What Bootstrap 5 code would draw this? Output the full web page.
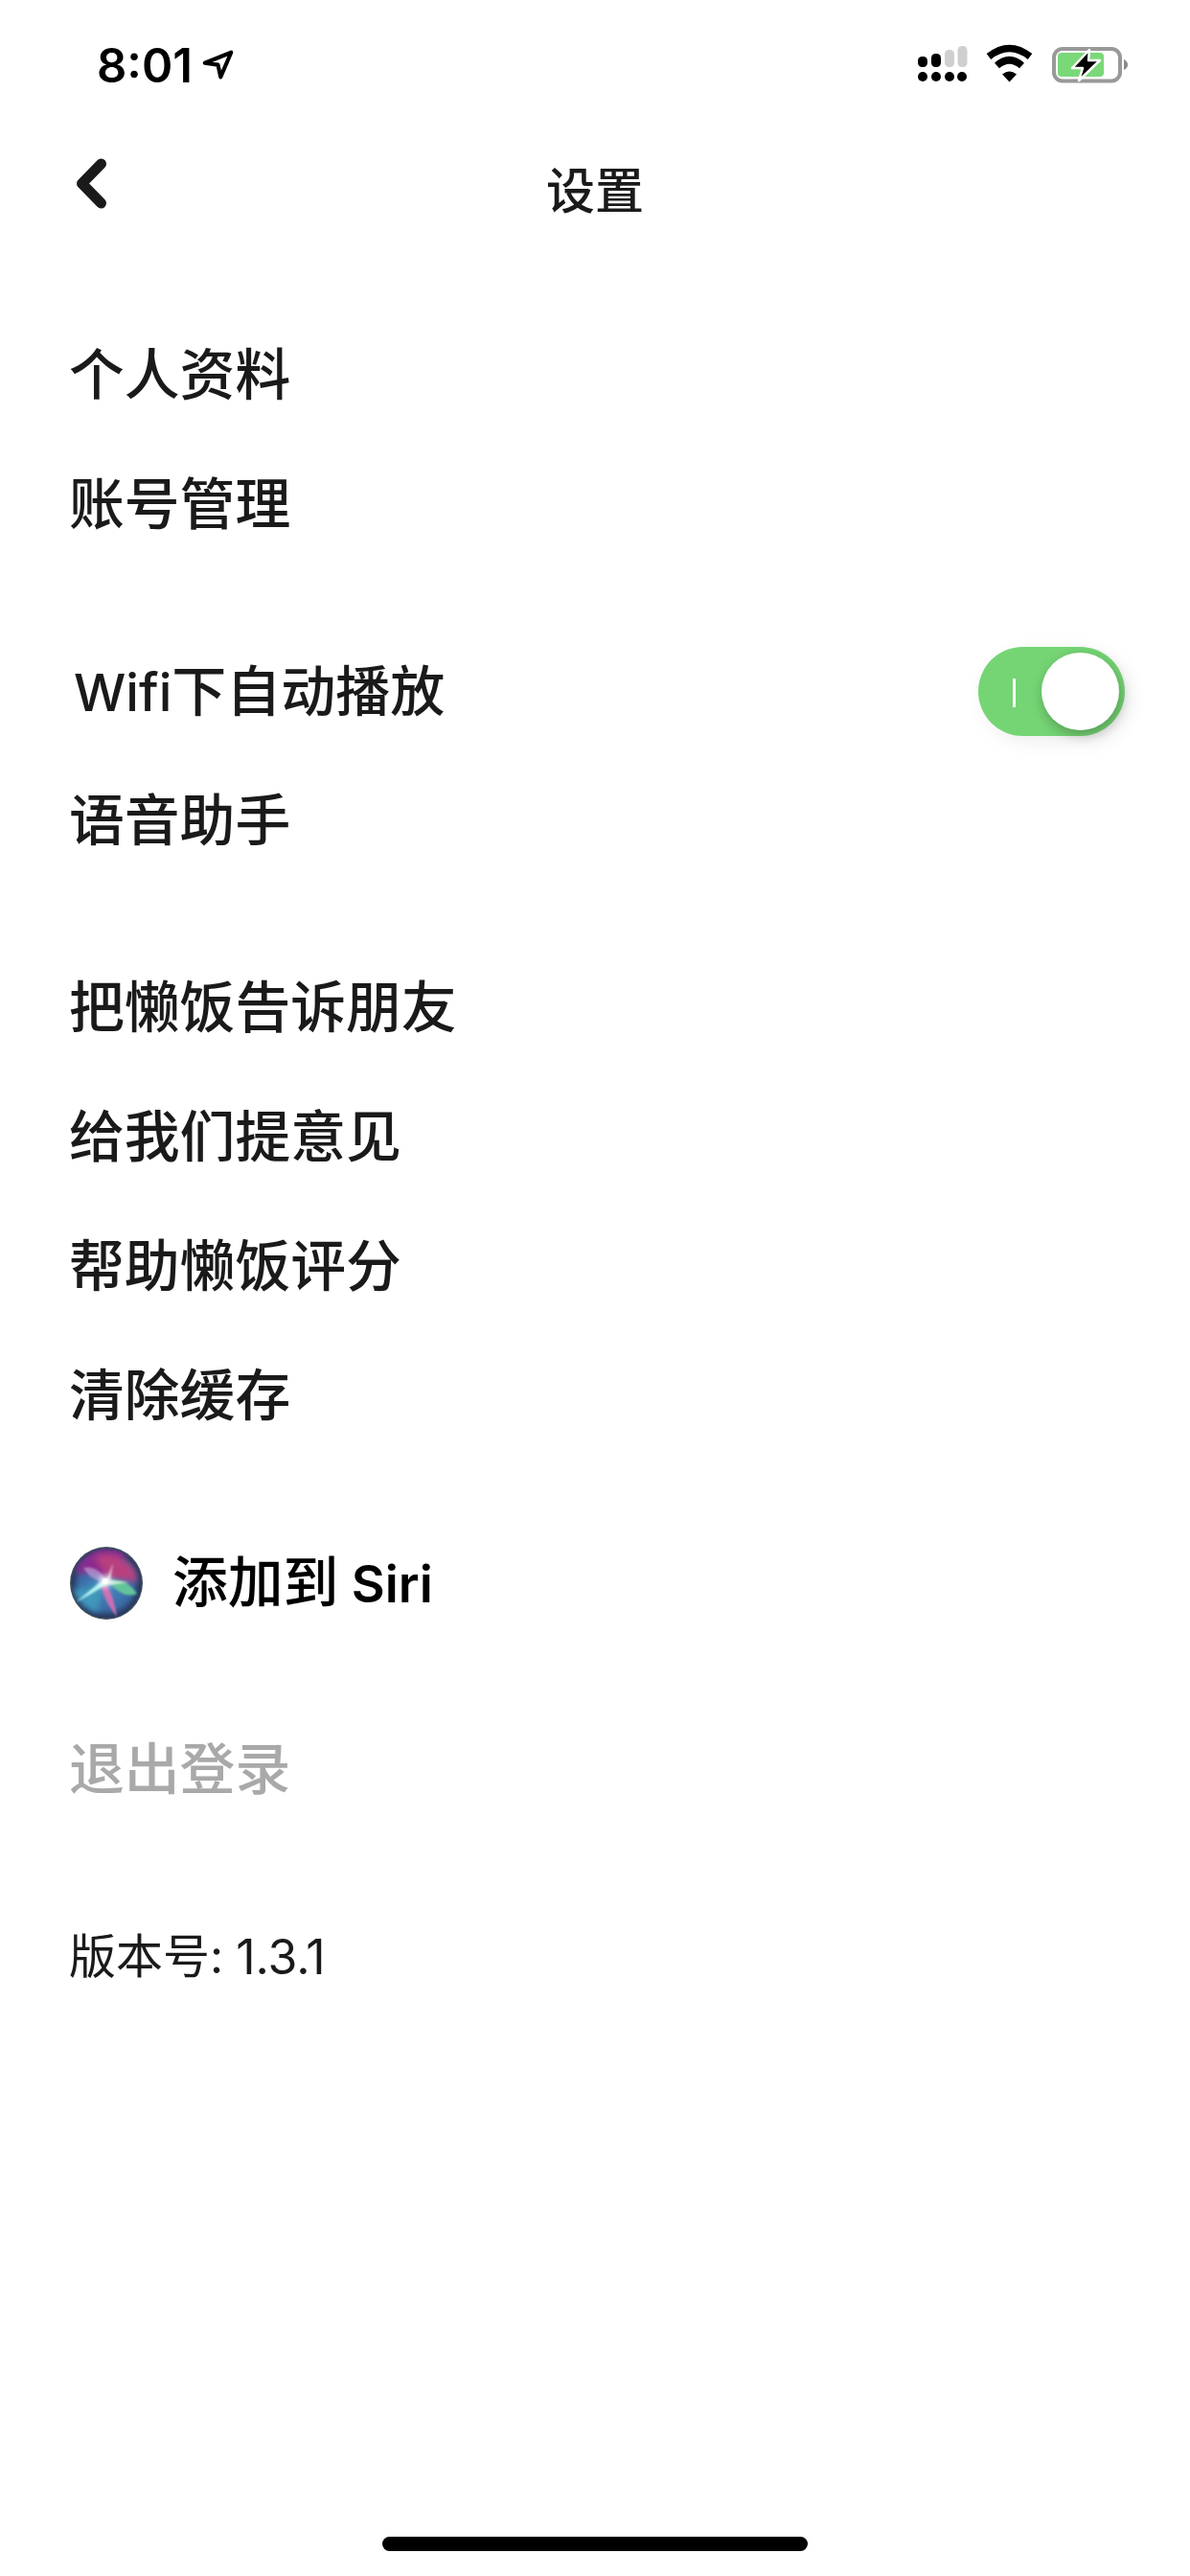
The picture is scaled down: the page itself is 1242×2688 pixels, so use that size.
<!doctype html>
<html lang="zh">
<head>
<meta charset="utf-8">
<title>设置</title>
<link rel="stylesheet" href="https://cdn.jsdelivr.net/npm/bootstrap@5.3.0/dist/css/bootstrap.min.css">
<style>
html,body{margin:0;background:#fff;}
body{width:1242px;height:2688px;overflow:hidden;font-family:"Inter","Noto Sans CJK SC",sans-serif;color:#1a1a1a;}
.phone{height:2688px;}
.statusbar{height:88px;padding:0 65px 0 101px;}
.clockwrap{margin-bottom:-5px;}
.clock{font-size:49px;font-weight:600;line-height:1;color:#000;}
.arrowicon{margin-left:10px;}
.topnav{height:206px;padding:0 74px;position:relative;}
.pagetitle{font-size:51px;font-weight:500;line-height:1;margin:0;position:absolute;left:0;right:0;top:0;bottom:0;padding-top:17px;}
.setgroup{margin-top:60px;}
.setgroup.first{margin-top:30px;}
.setrow{height:135px;padding:0 68px 0 72px;font-size:57.8px;font-weight:500;line-height:1;background:transparent;border:0;border-radius:0;color:#1a1a1a;}
.setrow.muted{color:#a9a9a9;}
.setrow.darkrow{color:#000;}
.setrow.small-row{font-size:49px;font-weight:400;}
.wifi-label{margin-left:5px;font-size:57px;}
.latintext{font-size:.95em;}
.sirilatin{font-size:.93em;font-weight:600;margin-left:-2px;}
.verlatin{font-size:50px;font-weight:400;margin-left:13px;}
.siri{width:78px;height:78px;margin-right:30px;}
.switchtrack{width:153px;height:93px;border-radius:47px;background:#75d574;padding-right:6px;position:relative;box-shadow:6px 6px 20px rgba(0,0,0,.07);}
.switchknob{width:81px;height:81px;border-radius:50%;background:#fff;box-shadow:2px 5px 14px rgba(0,0,0,.28);}
.switchmark{position:absolute;left:36px;top:33px;width:3px;height:30px;background:#fff;}
.homebar{position:absolute;left:399px;top:2647px;width:444px;height:15px;border-radius:8px;background:#000;}
</style>
</head>
<body>
<div class="phone position-relative">
  <div class="statusbar d-flex align-items-end justify-content-between">
    <div class="clockwrap d-flex align-items-center">
      <span class="clock">8:01</span>
      <svg class="arrowicon" width="33" height="33" viewBox="0 0 36 36"><path d="M3 15 L33 3 L21 31 L18 17 Z" fill="none" stroke="#000" stroke-width="4.500" stroke-linejoin="round"/></svg>
    </div>
    <svg width="225" height="42" viewBox="952 46 225 42">
      <g fill="#000">
        <circle cx="963" cy="80" r="5"/><circle cx="977" cy="80" r="5"/><circle cx="991" cy="80" r="5"/><circle cx="1004" cy="80" r="5"/>
        <rect x="958" y="59" width="10" height="11" rx="4.5"/><rect x="972" y="56" width="10" height="14" rx="4.5"/>
      </g>
      <g fill="#cfcfcf"><rect x="986" y="52" width="10" height="18" rx="4.5"/><rect x="999.5" y="48" width="10" height="22" rx="4.5"/></g>
      <g fill="none" stroke="#000" stroke-width="7.5">
        <path d="M1032 59 Q1053.500 42 1075 59"/>
        <path d="M1040.500 68.500 Q1053.500 57 1066.500 68.500"/>
      </g>
      <path d="M1046 77.500 Q1053.500 71.500 1061 77.500 L1053.500 85.500 Z" fill="#000"/>
      <rect x="1100" y="51" width="69" height="33.500" rx="9" fill="none" stroke="#999" stroke-width="4"/>
      <rect x="1104" y="55" width="48" height="25" rx="4" fill="#7ad879"/>
      <path d="M1173 62 Q1177 64 1177 67.500 Q1177 71 1173 73 Z" fill="#8a8a8a"/>
      <path d="M1137 52 L1119 71 L1130 71 L1126 84 L1148 63 L1136 63 Z" fill="#000" stroke="#fff" stroke-width="2.500" stroke-linejoin="round"/>
    </svg>
  </div>
  <nav class="topnav d-flex align-items-center">
    <svg width="44" height="64" viewBox="0 0 44 64" aria-label="返回"><path d="M31.500 12 L11.500 32.500 L31.500 53" fill="none" stroke="#1a1a1a" stroke-width="11" stroke-linecap="round" stroke-linejoin="round"/></svg>
    <h1 class="pagetitle d-flex align-items-center justify-content-center">设置</h1>
  </nav>

  <div class="setgroup first list-group list-group-flush">
    <div class="setrow list-group-item d-flex align-items-center">个人资料</div>
    <div class="setrow list-group-item d-flex align-items-center">账号管理</div>
  </div>
  <div class="setgroup list-group list-group-flush">
    <div class="setrow list-group-item d-flex align-items-center justify-content-between">
      <span class="wifi-label"><span class="latintext">Wifi</span>下自动播放</span>
      <span class="switchtrack d-flex align-items-center justify-content-end"><span class="switchmark"></span><span class="switchknob"></span></span>
    </div>
    <div class="setrow list-group-item d-flex align-items-center">语音助手</div>
  </div>
  <div class="setgroup list-group list-group-flush">
    <div class="setrow list-group-item d-flex align-items-center">把懒饭告诉朋友</div>
    <div class="setrow list-group-item d-flex align-items-center">给我们提意见</div>
    <div class="setrow list-group-item d-flex align-items-center">帮助懒饭评分</div>
    <div class="setrow list-group-item d-flex align-items-center">清除缓存</div>
  </div>
  <div class="setgroup list-group list-group-flush">
    <div class="setrow darkrow list-group-item d-flex align-items-center">
      <svg class="siri" viewBox="0 0 78 78">
        <defs>
          <radialGradient id="sb" cx="50%" cy="50%" r="50%">
            <stop offset="0" stop-color="#4a8ec6"/><stop offset=".72" stop-color="#3a6aa5"/><stop offset=".93" stop-color="#28395f"/><stop offset="1" stop-color="#44565f"/>
          </radialGradient>
          <filter id="bl" x="-30%" y="-30%" width="160%" height="160%"><feGaussianBlur stdDeviation="3"/></filter>
          <filter id="bs" x="-30%" y="-30%" width="160%" height="160%"><feGaussianBlur stdDeviation=".8"/></filter>
          <filter id="bg" x="-80%" y="-80%" width="260%" height="260%"><feGaussianBlur stdDeviation="3"/></filter>
          <clipPath id="sc"><circle cx="39" cy="39" r="36.500"/></clipPath>
        </defs>
        <circle cx="39" cy="39" r="38" fill="url(#sb)"/>
        <g clip-path="url(#sc)">
          <path d="M4 44 Q8 46 36 40 L30 70 Q8 62 4 44Z" fill="#3f98bb" filter="url(#bl)"/>
          <path d="M8 22 Q28 -6 60 8 Q50 22 40 36 Q24 26 8 30Z" fill="#8a2a8f" filter="url(#bl)"/>
          <path d="M26 12 Q50 2 68 24 Q72 32 70 38 L42 34 Z" fill="#b8407f" filter="url(#bl)"/>
          <path d="M44 36 Q60 34 71 50 Q56 56 42 38Z" fill="#63c49a" filter="url(#bs)"/>
          <path d="M15 23 Q30 20 39 37 Q24 38 15 23Z" fill="#c9b0e0" opacity=".6" filter="url(#bs)"/>
          <path d="M38 38 Q47 52 50 74 Q38 60 33 42Z" fill="#d86fb4" opacity=".9" filter="url(#bs)"/>
          <path d="M7 59 L36 35 L40 40 Q24 50 7 59Z" fill="#b4f4f0" filter="url(#bs)"/>
          <path d="M38 38 L46 18 L43 36 L64 38 L41 41 Z" fill="#fff" opacity=".65" filter="url(#bs)"/>
          <circle cx="38" cy="37" r="6" fill="#fff" filter="url(#bg)"/>
          <circle cx="38" cy="37" r="3" fill="#fff"/>
        </g>
      </svg>
      <span>添加到 <span class="sirilatin">Siri</span></span>
    </div>
  </div>
  <div class="setgroup list-group list-group-flush">
    <div class="setrow muted list-group-item d-flex align-items-center">退出登录</div>
  </div>
  <div class="setgroup list-group list-group-flush">
    <div class="setrow small-row list-group-item d-flex align-items-center">版本号: <span class="verlatin">1.3.1</span></div>
  </div>
  <div class="homebar"></div>
</div>
<script src="https://cdn.jsdelivr.net/npm/bootstrap@5.3.0/dist/js/bootstrap.bundle.min.js"></script>
</body>
</html>
